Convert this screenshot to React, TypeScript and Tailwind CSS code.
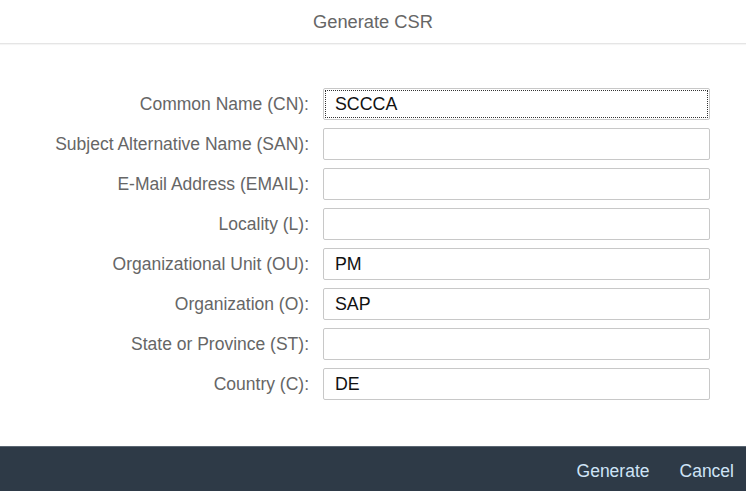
import React from 'react';

const fields = [
  { label: 'Common Name (CN):', value: 'SCCCA', focused: true },
  { label: 'Subject Alternative Name (SAN):', value: '' },
  { label: 'E-Mail Address (EMAIL):', value: '' },
  { label: 'Locality (L):', value: '' },
  { label: 'Organizational Unit (OU):', value: 'PM' },
  { label: 'Organization (O):', value: 'SAP' },
  { label: 'State or Province (ST):', value: '' },
  { label: 'Country (C):', value: 'DE' },
];

export default function App() {
  return (
    <div className="flex h-[491px] w-[746px] flex-col bg-white font-['Liberation_Sans',Arial,sans-serif]">
      {/* Dialog header */}
      <header className="flex h-[44px] items-center justify-center border-b border-[#e5e5e5] shadow-[0_1px_1px_rgba(0,0,0,0.04)]">
        <h1 className="text-[18.3px] text-[#666666]">Generate CSR</h1>
      </header>

      {/* Form */}
      <div className="flex flex-col gap-2 pt-[44px]">
        {fields.map((f) => (
          <div key={f.label} className="flex items-center">
            <label className="w-[310px] pr-[1px] pt-[1px] text-right text-[17.5px] text-[#666666]">{f.label}</label>
            <div className="ml-[13px] w-[387px]">
              <div className="flex h-[32px] items-center rounded-[2px] border border-[#c8c8c8] bg-white p-[2px]">
                <div
                  className={`flex h-full w-full items-center pl-[9px] text-[17.8px] text-[#111111] ${
                    f.focused ? 'outline-1 outline-dotted outline-[#333]' : ''
                  }`}
                >
                  {f.value}
                </div>
              </div>
            </div>
          </div>
        ))}
      </div>

      {/* Footer toolbar */}
      <footer className="mt-auto flex h-[45px] items-center justify-end gap-[30px] border-t border-[#5b6672] bg-[#2e3a47] pr-[12px] pt-[5px]">
        <button className="text-[17.5px] text-[#cfe4f7]">Generate</button>
        <button className="text-[17.5px] text-[#cfe4f7]">Cancel</button>
      </footer>
    </div>
  );
}
